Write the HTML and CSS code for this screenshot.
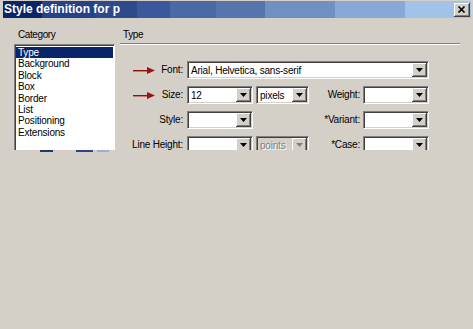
FILE: index.html
```html
<!DOCTYPE html>
<html lang="en">
<head>
    <meta charset="UTF-8">
    <title>Style definition for p</title>
    <link rel="stylesheet" href="styles.css">
</head>
<body>
    <div class="window">
        <div class="titlebar">
            <span class="title">Style definition for p</span>
            <span class="close-btn">
                <svg width="16" height="14" viewBox="0 0 16 14">
                    <path d="M4.5 3.5l6 6M10.5 3.5l-6 6" stroke="#000" stroke-width="1.7" fill="none"/>
                </svg>
            </span>
        </div>

        <div class="dialog-body">
            <div class="category">
                <div class="group-label">Category</div>
                <div class="listbox">
                    <div class="list-item selected">Type</div>
                    <div class="list-item">Background</div>
                    <div class="list-item">Block</div>
                    <div class="list-item">Box</div>
                    <div class="list-item">Border</div>
                    <div class="list-item">List</div>
                    <div class="list-item">Positioning</div>
                    <div class="list-item">Extensions</div>
                </div>
            </div>

            <div class="panel">
                <div class="group-label panel-title">Type</div>
                <div class="rule"></div>

                <div class="form">
                    <div class="label">
                        <svg class="pointer" width="22" height="9" viewBox="0 0 22 9">
                            <rect x="0" y="4" width="15" height="1" fill="#8e1010"/>
                            <rect x="0" y="5" width="15" height="1" fill="#c47a7a"/>
                            <polygon points="14,1 22,4.5 14,8" fill="#9a1414"/>
                        </svg>
                        Font:
                    </div>
                    <div class="combo wide"><span class="combo-text">Arial, Helvetica, sans-serif</span><span class="combo-btn"></span></div>

                    <div class="label">
                        <svg class="pointer" width="22" height="9" viewBox="0 0 22 9">
                            <rect x="0" y="4" width="15" height="1" fill="#8e1010"/>
                            <rect x="0" y="5" width="15" height="1" fill="#c47a7a"/>
                            <polygon points="14,1 22,4.5 14,8" fill="#9a1414"/>
                        </svg>
                        Size:
                    </div>
                    <div class="combo small"><span class="combo-text">12</span><span class="combo-btn"></span></div>
                    <div class="combo unit"><span class="combo-text">pixels</span><span class="combo-btn"></span></div>
                    <div class="label right">Weight:</div>
                    <div class="combo side"><span class="combo-text"></span><span class="combo-btn"></span></div>

                    <div class="label">Style:</div>
                    <div class="combo small"><span class="combo-text"></span><span class="combo-btn"></span></div>
                    <div></div>
                    <div class="label right">*Variant:</div>
                    <div class="combo side"><span class="combo-text"></span><span class="combo-btn"></span></div>

                    <div class="label">Line Height:</div>
                    <div class="combo small"><span class="combo-text"></span><span class="combo-btn"></span></div>
                    <div class="combo unit disabled"><span class="combo-text">points</span><span class="combo-btn"></span></div>
                    <div class="label right">*Case:</div>
                    <div class="combo side"><span class="combo-text"></span><span class="combo-btn"></span></div>
                </div>
            </div>
        </div>
    </div>

    <div class="strip">
        <span class="seg" style="margin-left: 40px; width: 13px; background: #24386e;"></span>
        <span class="seg" style="margin-left: 23px; width: 17px; background: #2c4682;"></span>
        <span class="seg" style="margin-left: 4px; width: 12px; background: #94b0d8;"></span>
    </div>
</body>
</html>
```

FILE: styles.css
```css
html, body {
    margin: 0;
    background-color: #d4d0c8;
    font-family: "Liberation Sans", Arial, sans-serif;
    font-size: 10px;
    letter-spacing: -0.2px;
    color: #000;
}

.window {
    height: 150px;
    overflow: hidden;
    padding-top: 1px;
    box-sizing: border-box;
}

.titlebar {
    display: flex;
    height: 17px;
    margin: 0 2px 0 3px;
    background: linear-gradient(to right,
        #0a246a 0 39px,
        #26408a 39px 92px,
        #2d4a8b 92px 134px,
        #3a589a 134px 167px,
        #4a6aa6 167px 213px,
        #5675ae 213px 262px,
        #6f90c2 262px 332px,
        #88a9d8 332px 402px,
        #a2c2ea 402px);
}

.title {
    color: #fff;
    font-size: 12px;
    font-weight: bold;
    letter-spacing: 0;
    line-height: 17px;
    padding-left: 1px;
}

.close-btn {
    margin: 2px 1px 0 auto;
    width: 16px;
    height: 14px;
    background: #d4d0c8;
    box-shadow: inset -1px -1px #404040, inset 1px 1px #fff, inset -2px -2px #808080;
    display: flex;
}

.dialog-body {
    display: flex;
    padding: 11px 0 0 14px;
}

.group-label {
    line-height: 12px;
    padding-left: 4px;
    letter-spacing: -0.4px;
}

.category {
    width: 101px;
}

.listbox {
    margin-top: 3px;
    height: 120px;
    background: #fff;
    border: 1px solid;
    border-color: #808080 #fff #fff #808080;
    box-shadow: inset 1px 1px #404040;
    padding: 2px 1px 0 1px;
}

.list-item {
    line-height: 11.4px;
    padding-left: 2px;
}

.list-item.selected {
    background: #0a246a;
    color: #fff;
}

.panel {
    margin-left: 5px;
    width: 340px;
}

.panel-title {
    padding-left: 3px;
}

.rule {
    margin-top: 2px;
    height: 1px;
    background: #808080;
    border-bottom: 1px solid #fff;
}

.form {
    margin-top: 16px;
    display: grid;
    grid-template-columns: 67px 69px 53px 54px 66px;
    grid-auto-rows: 18px;
    row-gap: 7px;
}

.label {
    display: flex;
    align-items: center;
    justify-content: flex-end;
    padding: 0 4px 1px 0;
    line-height: 11px;
    white-space: nowrap;
}

.label.right {
    padding-right: 3px;
}

.pointer {
    margin: 1px auto 0 13px;
}

.combo {
    display: flex;
    box-sizing: border-box;
    height: 18px;
    background: #fff;
    border: 1px solid;
    border-color: #808080 #fff #fff #808080;
    box-shadow: inset 1px 1px #404040, inset -1px -1px #d4d0c8;
    padding: 1px;
}

.combo.wide {
    grid-column: 2 / 6;
}

.combo.small {
    width: 66px;
}

.combo.unit {
    width: 53px;
}

.combo-text {
    flex: 1;
    line-height: 13px;
    padding: 1px 0 0 2px;
    overflow: hidden;
    white-space: nowrap;
}

.combo-btn {
    width: 15px;
    height: 14px;
    background: #d4d0c8;
    box-shadow: inset -1px -1px #404040, inset 1px 1px #fff, inset -2px -2px #808080;
    display: flex;
    align-items: center;
    justify-content: center;
}

.combo-btn::after {
    content: "";
    width: 7px;
    height: 4px;
    background: #000;
    clip-path: polygon(0 0, 100% 0, 50% 100%);
}

.combo.disabled {
    background: #d4d0c8;
}

.combo.disabled .combo-text {
    color: #808080;
    text-shadow: 1px 1px #fff;
}

.combo.disabled .combo-btn::after {
    background: #808080;
}

.strip {
    display: flex;
    height: 2px;
}

.seg {
    display: block;
    height: 2px;
}
```
